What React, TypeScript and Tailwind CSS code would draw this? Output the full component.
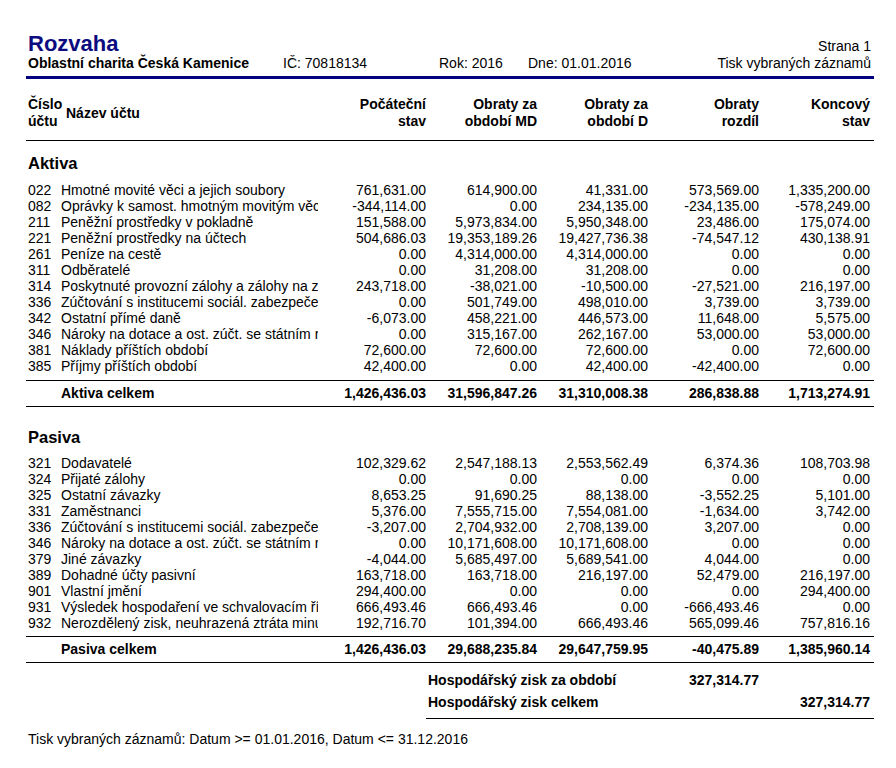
import React from "react";

type Row = [string, string, string, string, string, string, string];

const aktiva: Row[] = [
  ["022", "Hmotné movité věci a jejich soubory", "761,631.00", "614,900.00", "41,331.00", "573,569.00", "1,335,200.00"],
  ["082", "Oprávky k samost. hmotným movitým věcem", "-344,114.00", "0.00", "234,135.00", "-234,135.00", "-578,249.00"],
  ["211", "Peněžní prostředky v pokladně", "151,588.00", "5,973,834.00", "5,950,348.00", "23,486.00", "175,074.00"],
  ["221", "Peněžní prostředky na účtech", "504,686.03", "19,353,189.26", "19,427,736.38", "-74,547.12", "430,138.91"],
  ["261", "Peníze na cestě", "0.00", "4,314,000.00", "4,314,000.00", "0.00", "0.00"],
  ["311", "Odběratelé", "0.00", "31,208.00", "31,208.00", "0.00", "0.00"],
  ["314", "Poskytnuté provozní zálohy a zálohy na zásoby", "243,718.00", "-38,021.00", "-10,500.00", "-27,521.00", "216,197.00"],
  ["336", "Zúčtování s institucemi sociál. zabezpečení", "0.00", "501,749.00", "498,010.00", "3,739.00", "3,739.00"],
  ["342", "Ostatní přímé daně", "-6,073.00", "458,221.00", "446,573.00", "11,648.00", "5,575.00"],
  ["346", "Nároky na dotace a ost. zúčt. se státním rozpočtem", "0.00", "315,167.00", "262,167.00", "53,000.00", "53,000.00"],
  ["381", "Náklady příštích období", "72,600.00", "72,600.00", "72,600.00", "0.00", "72,600.00"],
  ["385", "Příjmy příštích období", "42,400.00", "0.00", "42,400.00", "-42,400.00", "0.00"],
];

const pasiva: Row[] = [
  ["321", "Dodavatelé", "102,329.62", "2,547,188.13", "2,553,562.49", "6,374.36", "108,703.98"],
  ["324", "Přijaté zálohy", "0.00", "0.00", "0.00", "0.00", "0.00"],
  ["325", "Ostatní závazky", "8,653.25", "91,690.25", "88,138.00", "-3,552.25", "5,101.00"],
  ["331", "Zaměstnanci", "5,376.00", "7,555,715.00", "7,554,081.00", "-1,634.00", "3,742.00"],
  ["336", "Zúčtování s institucemi sociál. zabezpečení", "-3,207.00", "2,704,932.00", "2,708,139.00", "3,207.00", "0.00"],
  ["346", "Nároky na dotace a ost. zúčt. se státním rozpočtem", "0.00", "10,171,608.00", "10,171,608.00", "0.00", "0.00"],
  ["379", "Jiné závazky", "-4,044.00", "5,685,497.00", "5,689,541.00", "4,044.00", "0.00"],
  ["389", "Dohadné účty pasivní", "163,718.00", "163,718.00", "216,197.00", "52,479.00", "216,197.00"],
  ["901", "Vlastní jmění", "294,400.00", "0.00", "0.00", "0.00", "294,400.00"],
  ["931", "Výsledek hospodaření ve schvalovacím řízení", "666,493.46", "666,493.46", "0.00", "-666,493.46", "0.00"],
  ["932", "Nerozdělený zisk, neuhrazená ztráta minulých let", "192,716.70", "101,394.00", "666,493.46", "565,099.46", "757,816.16"],
];

const grid = "grid grid-cols-[35px_257px_108px_111px_111px_111px_111px]";

function DataRow({ r }: { r: Row }) {
  return (
    <div className={`${grid} h-[16px] leading-[16px] text-[14px]`}>
      <div className="pl-[2px]">{r[0]}</div>
      <div className="overflow-hidden whitespace-nowrap">{r[1]}</div>
      {r.slice(2).map((v, i) => (
        <div key={i} className="text-right whitespace-nowrap">
          {v}
        </div>
      ))}
    </div>
  );
}

function TotalRow({ label, vals }: { label: string; vals: string[] }) {
  return (
    <div className={`${grid} h-[26px] items-center text-[14px] font-bold border-b border-black`}>
      <div />
      <div className="whitespace-nowrap">{label}</div>
      {vals.map((v, i) => (
        <div key={i} className="text-right whitespace-nowrap">
          {v}
        </div>
      ))}
    </div>
  );
}

function HeadCell({ a, b }: { a: string; b: string }) {
  return (
    <div className="text-right leading-[17px]">
      <div>{a}</div>
      <div>{b}</div>
    </div>
  );
}

export default function App() {
  return (
    <div
      className="w-[896px] min-h-[768px] bg-white text-black pl-[26px] pt-[32px]"
      style={{ fontFamily: '"Liberation Sans", Arial, sans-serif' }}
    >
      <div className="w-[848px]">
        {/* Title */}
        <div className="flex items-baseline justify-between pl-[2px] pr-[3px]">
          <div className="text-[22px] leading-[23px] font-bold text-[#0c0c80]">Rozvaha</div>
          <div className="text-[14px]">Strana 1</div>
        </div>
        <div className="flex items-center h-[16px] leading-[16px] text-[14px] pl-[2px] pr-[3px] -mt-[2px]">
          <div className="w-[255px] font-bold">Oblastní charita Česká Kamenice</div>
          <div className="w-[156px]">IČ: 70818134</div>
          <div className="w-[89px]">Rok: 2016</div>
          <div className="flex-1">Dne: 01.01.2016</div>
          <div>Tisk vybraných záznamů</div>
        </div>
        <div className="mt-[5px] h-[3px] bg-[#000080]" />

        {/* Column header */}
        <div className={`${grid} mt-[17px] pb-[10px] border-b border-black text-[14px] font-bold`}>
          <div className="pl-[2px] leading-[17px]">
            <div>Číslo</div>
            <div>účtu</div>
          </div>
          <div className="flex items-center pl-[5px]">Název účtu</div>
          <HeadCell a="Počáteční" b="stav" />
          <HeadCell a="Obraty za" b="období MD" />
          <HeadCell a="Obraty za" b="období D" />
          <HeadCell a="Obraty" b="rozdíl" />
          <HeadCell a="Koncový" b="stav" />
        </div>

        {/* Aktiva */}
        <div className="mt-[12px] pl-[2px] text-[16.5px] font-bold leading-[20px]">Aktiva</div>
        <div className="mt-[9px] pb-[6px] border-b border-black">
          {aktiva.map((r) => (
            <DataRow key={r[0] + r[1]} r={r} />
          ))}
        </div>
        <TotalRow
          label="Aktiva celkem"
          vals={["1,426,436.03", "31,596,847.26", "31,310,008.38", "286,838.88", "1,713,274.91"]}
        />

        {/* Pasiva */}
        <div className="mt-[20px] pl-[2px] text-[16.5px] font-bold leading-[20px]">Pasiva</div>
        <div className="mt-[8px] pb-[5px] border-b border-black">
          {pasiva.map((r) => (
            <DataRow key={r[0] + r[1]} r={r} />
          ))}
        </div>
        <TotalRow
          label="Pasiva celkem"
          vals={["1,426,436.03", "29,688,235.84", "29,647,759.95", "-40,475.89", "1,385,960.14"]}
        />

        {/* Profit */}
        <div className="flex">
          <div className="w-[400px]" />
          <div className="flex-1 border-b border-black pt-[6px] pb-[5px] text-[14px] font-bold">
            <div className="grid grid-cols-[222px_111px_111px] h-[22px] items-center">
              <div className="pl-[2px] whitespace-nowrap">Hospodářský zisk za období</div>
              <div className="text-right">327,314.77</div>
              <div />
            </div>
            <div className="grid grid-cols-[222px_111px_111px] h-[22px] items-center">
              <div className="pl-[2px] whitespace-nowrap">Hospodářský zisk celkem</div>
              <div />
              <div className="text-right">327,314.77</div>
            </div>
          </div>
        </div>

        <div className="mt-[12px] pl-[2px] text-[14px] leading-[16px]">
          Tisk vybraných záznamů: Datum &gt;= 01.01.2016, Datum &lt;= 31.12.2016
        </div>
      </div>
    </div>
  );
}
